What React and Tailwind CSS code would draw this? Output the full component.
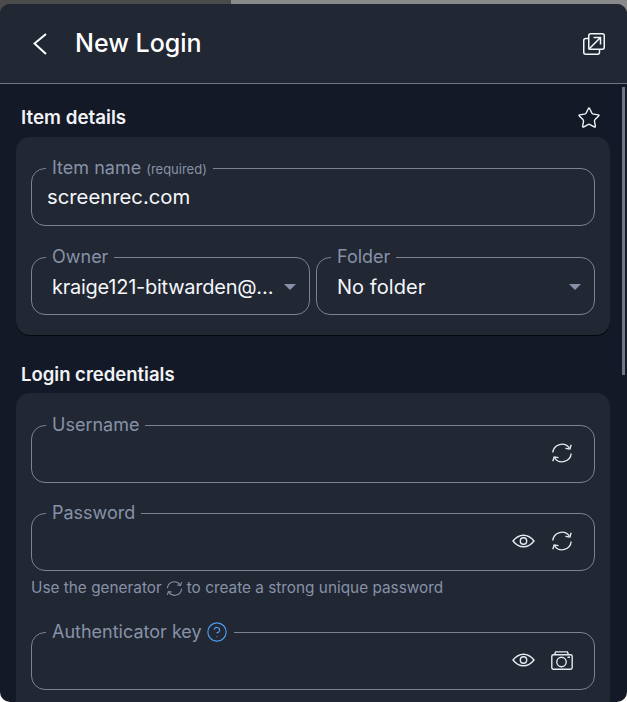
import React from "react";
import { Star, CircleHelp } from "lucide-react";

function GenerateIcon({ className = "h-[22px] w-[22px]" }) {
  return (
    <svg className={className} viewBox="0 0 24 24" fill="none" stroke="currentColor" strokeWidth="1.5">
      <path d="M2 11.5A10 10 0 0 1 20 6.5" />
      <path d="M22 3L20.6 7.6L15.8 7" />
      <path d="M22 12.5A10 10 0 0 1 4 17.5" />
      <path d="M2 21L3.4 16.4L8.2 17" />
    </svg>
  );
}

function EyeIcon() {
  return (
    <svg width="23" height="14" viewBox="0 0 23 14" fill="none" stroke="currentColor" strokeWidth="1.4">
      <path d="M1 7C4.5 2.5 8 1.2 11.5 1.2S18.5 2.5 22 7C18.5 11.5 15 12.8 11.5 12.8S4.5 11.5 1 7Z" />
      <circle cx="11.5" cy="7" r="3.2" />
    </svg>
  );
}

function CameraIcon() {
  return (
    <svg width="22" height="19" viewBox="0 0 22 19" fill="none" stroke="currentColor" strokeWidth="1.4">
      <rect x="0.8" y="3.8" width="20.4" height="14.4" rx="1.6" />
      <path d="M3.5 3.8L4.6 0.9H16.4L17.5 3.8" />
      <circle cx="10.5" cy="11" r="4.7" />
      <path d="M16.5 6.2H19" />
    </svg>
  );
}

function Field({ label, hint, help, children, className = "" }) {
  return (
    <fieldset className={`h-[68px] min-w-0 rounded-[14px] border border-[#7a8294] px-[15px] ${className}`}>
      <legend className="ml-[-1px] flex h-[20px] items-center px-[6px] text-[18px] leading-[20px] text-[#8792a8]">
        {label}
        {hint && <span className="ml-[5px] mt-[2px] text-[13px] text-[#8792a8]">{hint}</span>}
        {help && <CircleHelp className="ml-[4px] h-[22px] w-[22px] text-[#4f9cf0]" strokeWidth={1.25} />}
      </legend>
      {children}
    </fieldset>
  );
}

function SelectField({ label, value, textClass = "" }) {
  return (
    <Field label={label}>
      <div className="flex h-[39px] items-center pl-[5px]">
        <span className={`min-w-0 flex-1 truncate text-[20px] text-[#f4f6fa] ${textClass}`}>{value}</span>
        <span className="ml-[7px] mr-[-2px] h-0 w-0 border-x-[6px] border-t-[6px] border-x-transparent border-t-[#8792a8]" />
      </div>
    </Field>
  );
}

function IconRow({ children }) {
  return <div className="flex h-[36px] items-center justify-end gap-[16px] pr-[6px] text-[#e6e9ef]">{children}</div>;
}

export default function App() {
  return (
    <div className="relative h-[702px] w-[627px] overflow-hidden bg-white font-['Inter',sans-serif]">
      <div className="absolute inset-x-0 top-0 flex h-[16px] bg-[#8a8a8a]">
        <div className="w-[231px] rounded-br-[4px] bg-[#4b4b4b]" />
      </div>
      <div className="relative mt-[4px] h-[698px] overflow-hidden rounded-[10px] bg-[#131926]">
        <header className="flex h-[80px] items-center border-b border-[#6f7686] bg-[#212733] pl-[33px] pr-[22px]">
          <svg width="14" height="22" viewBox="0 0 14 22" fill="none" stroke="#ffffff" strokeWidth="2">
            <path d="M13 1L1.5 10.5L13 21" />
          </svg>
          <h1 className="ml-[28px] flex-1 text-[25px] font-medium text-white">New Login</h1>
          <svg width="22" height="22" viewBox="0 0 22 22" fill="none" stroke="#f4f6fa" strokeWidth="1.5">
            <rect x="5.75" y="0.75" width="15.5" height="15.5" rx="2" />
            <path d="M5.75 5.5H2.75a2 2 0 0 0-2 2V19.25a2 2 0 0 0 2 2H14.5a2 2 0 0 0 2-2V16.25" />
            <path d="M5.5 16.5L17.5 4.5M10.5 4.5H17.5V11.5" />
          </svg>
        </header>

        <main className="pl-[16px] pr-[17px]">
          <div className="flex h-[53px] items-end justify-between pb-[7px] pl-[5px] pr-[9px]">
            <h2 className="text-[18.8px] font-semibold leading-[24px] text-[#f1f3f7]">Item details</h2>
            <Star className="h-[24px] w-[24px] text-[#f1f3f7]" strokeWidth={1.4} />
          </div>
          <section className="h-[198px] rounded-[14px] bg-[#212733] px-[15px] pt-[21px] shadow-[0_1px_0_#05070c]">
            <Field label="Item name" hint="(required)">
              <div className="flex h-[38px] items-center text-[20.3px] text-[#f4f6fa]">screenrec.com</div>
            </Field>
            <div className="mt-[21px] grid grid-cols-2 gap-[6px]">
              <SelectField label="Owner" value="kraige121-bitwarden@gmail.com" textClass="tracking-[-0.25px]" />
              <SelectField label="Folder" value="No folder" textClass="tracking-[0.05px]" />
            </div>
          </section>

          <h2 className="mt-[27px] pl-[5px] text-[18.5px] font-semibold leading-[24px] text-[#f1f3f7]">Login credentials</h2>
          <section className="mt-[7px] h-[320px] rounded-[14px] bg-[#212733] px-[15px] pt-[22px]">
            <Field label="Username">
              <IconRow><GenerateIcon /></IconRow>
            </Field>
            <Field label="Password" className="mt-[20px]">
              <IconRow>
                <EyeIcon />
                <GenerateIcon />
              </IconRow>
            </Field>
            <p className="mt-[7px] flex items-center whitespace-nowrap text-[15.35px] leading-[20px] text-[#8792a8]">
              Use the generator
              <GenerateIcon className="mx-[4px] h-[17px] w-[17px]" />
              to create a strong unique password
            </p>
            <Field label="Authenticator key" help className="mt-[24px]">
              <IconRow>
                <EyeIcon />
                <CameraIcon />
              </IconRow>
            </Field>
          </section>
        </main>

        <div className="absolute right-[2px] top-[83px] h-[288px] w-[3px] bg-[#6f7686]" />
      </div>
    </div>
  );
}
